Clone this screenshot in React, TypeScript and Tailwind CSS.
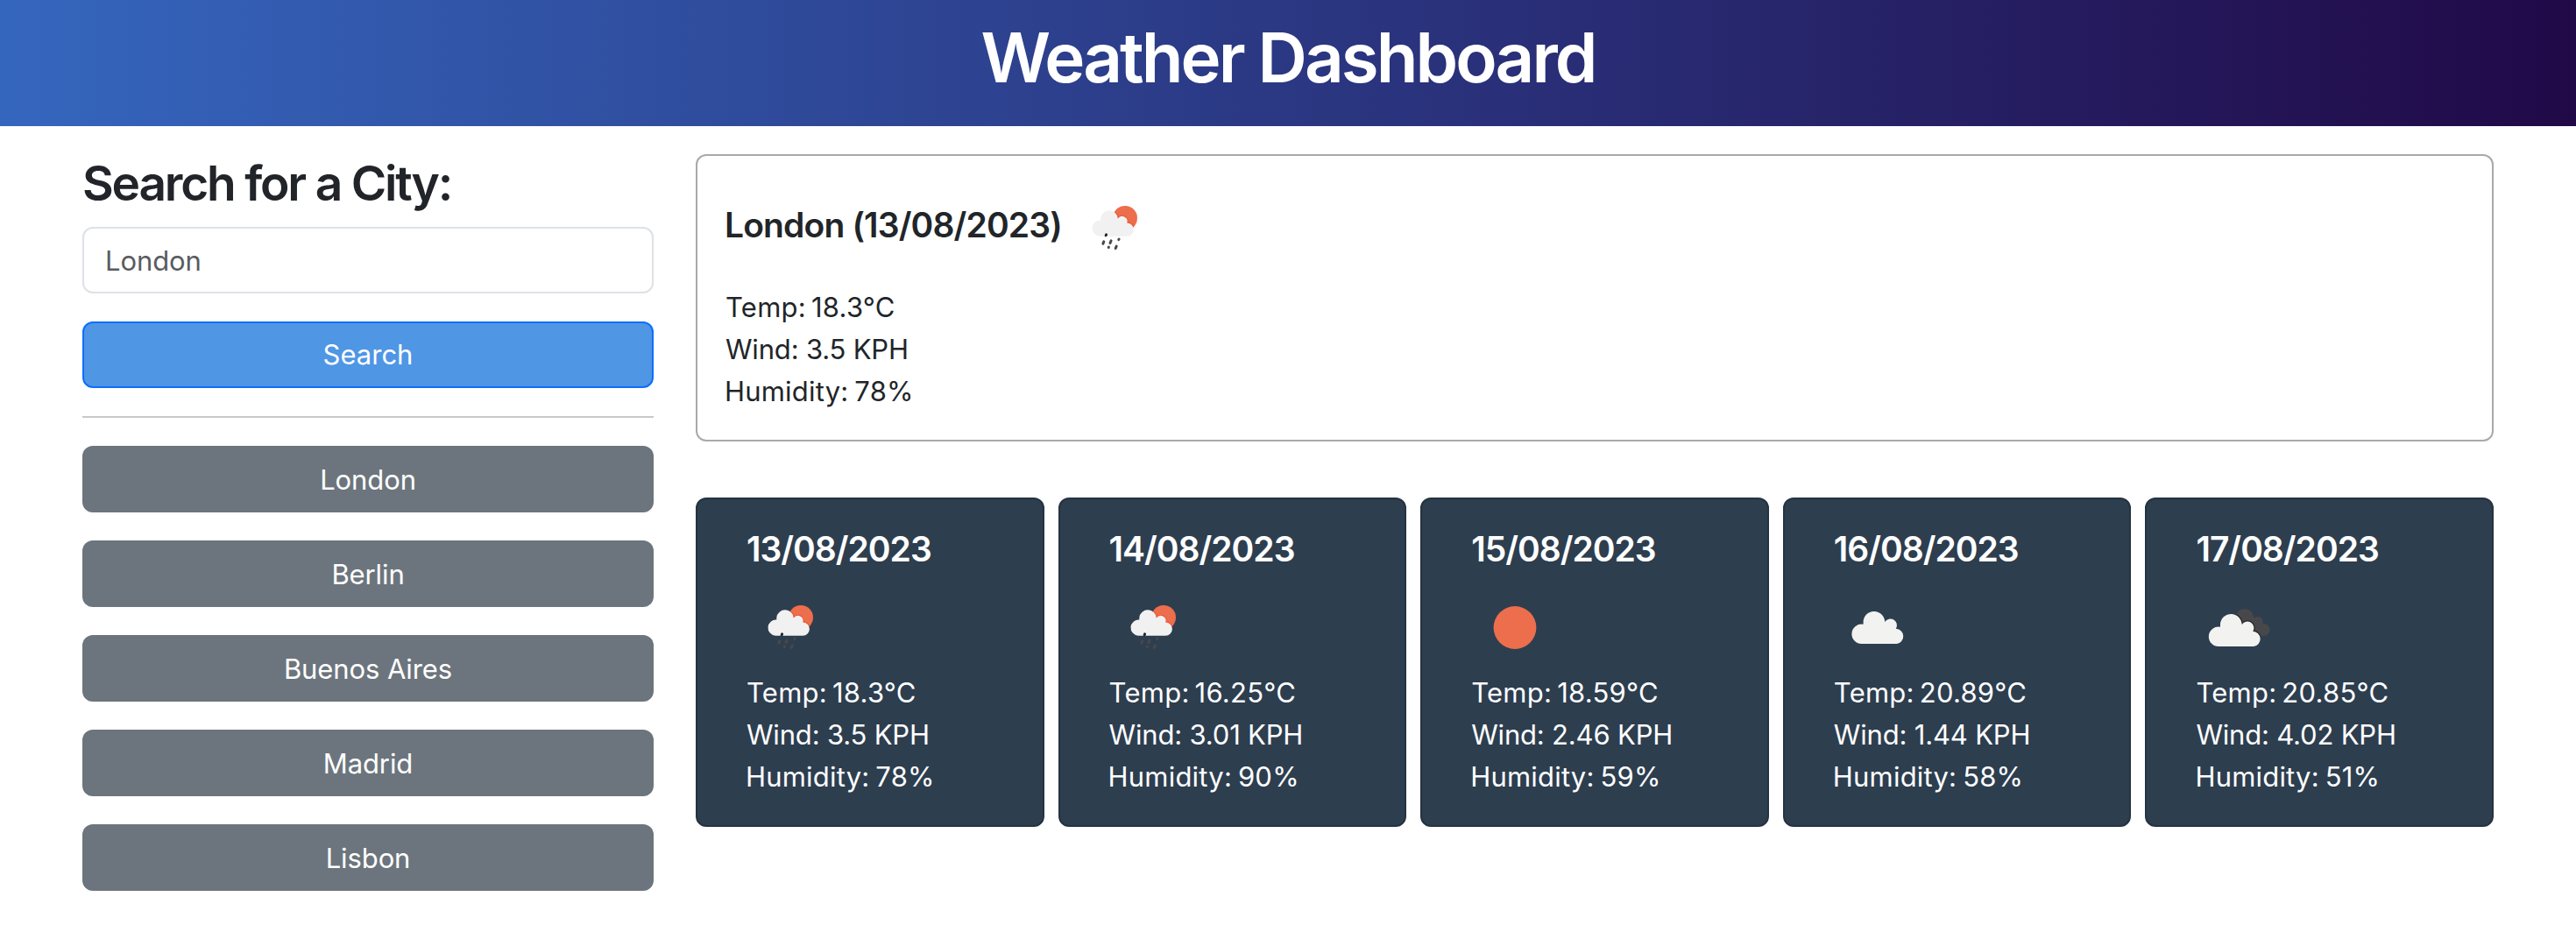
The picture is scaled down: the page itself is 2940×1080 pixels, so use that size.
import { useId } from "react";

type IconKind = "rain" | "clear" | "cloud" | "broken";

interface Forecast {
  date: string;
  icon: IconKind;
  temp: string;
  wind: string;
  humidity: string;
}

const cities = ["London", "Berlin", "Buenos Aires", "Madrid", "Lisbon"];

const forecasts: Forecast[] = [
  { date: "13/08/2023", icon: "rain", temp: "18.3", wind: "3.5", humidity: "78" },
  { date: "14/08/2023", icon: "rain", temp: "16.25", wind: "3.01", humidity: "90" },
  { date: "15/08/2023", icon: "clear", temp: "18.59", wind: "2.46", humidity: "59" },
  { date: "16/08/2023", icon: "cloud", temp: "20.89", wind: "1.44", humidity: "58" },
  { date: "17/08/2023", icon: "broken", temp: "20.85", wind: "4.02", humidity: "51" },
];

const bigCloud =
  "M32.4 69A11.2 11.2 0 1 1 33.6 46.8V44.3A12.3 12.3 0 0 1 58.2 44.1A7.3 7.3 0 0 1 70.9 51.7A8.7 8.7 0 0 1 71.8 69Z";
const smallCloud =
  "M33 59.7A9.1 9.1 0 1 1 34.3 41.5V39A9.8 9.8 0 0 1 53.8 39.4A5.9 5.9 0 0 1 64.3 44.5A7.6 7.6 0 0 1 64.3 59.7Z";

function RainIcon() {
  const id = useId();
  return (
    <>
      <clipPath id={id}>
        <circle cx="62" cy="39" r="14" />
      </clipPath>
      <circle cx="62" cy="39" r="14" fill="#ec6e4c" />
      <path d={smallCloud} fill="none" stroke="#ef4b2b" strokeWidth="1.8" clipPath={`url(#${id})`} />
      <path d={smallCloud} fill="#f1f1f1" />
      <g stroke="#48484a" strokeWidth="3" strokeLinecap="round">
        <path d="M40.6 57.8L40.2 58.8" stroke="#262626" />
        <path d="M37.8 65.9L36.9 68.3" />
        <path d="M46.1 64.8L45 67.5" />
        <path d="M55.1 63.1L54.8 63.6" />
        <path d="M43.4 72.1L43.2 72.5" />
        <path d="M52.2 71.1L51.2 73.5" />
      </g>
    </>
  );
}

function BrokenCloudsIcon() {
  const id = useId();
  const dark = (
    <>
      <circle cx="55.9" cy="39.3" r="10.4" />
      <circle cx="70.6" cy="43.9" r="6.1" />
      <circle cx="77.5" cy="53" r="7.1" />
      <path d="M55 40H67L73 47L77 60H55Z" />
    </>
  );
  return (
    <>
      <clipPath id={id}>{dark}</clipPath>
      <g fill="#48484a">{dark}</g>
      <g clipPath={`url(#${id})`}>
        <path d={bigCloud} transform="translate(-5.6 3)" fill="none" stroke="#262626" strokeWidth="2.4" />
      </g>
      <path d={bigCloud} transform="translate(-5.6 3)" fill="#f2f2f1" />
    </>
  );
}

function WeatherIcon({ kind }: { kind: IconKind }) {
  return (
    <svg viewBox="0 0 100 100" className="block size-[100px] shrink-0">
      {kind === "rain" && <RainIcon />}
      {kind === "clear" && <circle cx="50" cy="50.5" r="24.4" fill="#ec6e4c" />}
      {kind === "cloud" && <path d={bigCloud} fill="#f2f2f1" />}
      {kind === "broken" && <BrokenCloudsIcon />}
    </svg>
  );
}

function Readings({ temp, wind, humidity }: { temp: string; wind: string; humidity: string }) {
  return (
    <div className="text-[31px] leading-[48px]">
      <p className="tracking-[0.25px] [word-spacing:-3px]">Temp: {temp}°C</p>
      <p className="tracking-[-0.18px]">Wind: {wind} KPH</p>
      <p className="-ml-px tracking-[0.2px] [word-spacing:-2px]">Humidity: {humidity}%</p>
    </div>
  );
}

export default function App() {
  return (
    <div className="min-h-screen bg-white font-[Inter,sans-serif] text-[#212529]">
      <header className="h-36 bg-[linear-gradient(90deg,#3566be_0%,#210947_100%)] pt-[18px] text-center">
        <h1 className="text-[78px] leading-24 font-semibold tracking-[-2.93px] text-white">Weather Dashboard</h1>
      </header>

      <div className="flex gap-12 px-[94px] pt-8">
        <aside className="w-[652px] shrink-0">
          <h2 className="mb-4 text-[55px] leading-[67px] font-semibold tracking-[-2.2px]">Search for a City:</h2>
          <input
            type="text"
            placeholder="London"
            className="block h-[76px] w-full rounded-xl border-2 border-[#dee2e6] px-6 pt-px text-[31px] tracking-[-0.1px] placeholder:text-[#595c5f] focus:outline-none"
          />
          <button className="mt-8 block h-[76px] w-full rounded-xl border-2 border-[#0d6efd] bg-[#4f96e5] pt-px text-[31px] text-white">
            Search
          </button>
          <hr className="my-8 border-t-2 border-[#c8c9ca]" />
          <div className="flex flex-col gap-8">
            {cities.map((city) => (
              <button
                key={city}
                className="h-[76px] w-full rounded-xl bg-[#6c757d] pt-0.5 text-[31px] tracking-[-0.1px] text-white"
              >
                {city}
              </button>
            ))}
          </div>
        </aside>

        <main className="min-w-0 flex-1">
          <section className="h-[328px] rounded-xl border-2 border-[#a9a9a9] px-8 pt-8">
            <div className="flex h-[100px] items-center">
              <h3 className="-ml-px w-[395px] pb-1.5 text-[39px] leading-12 font-semibold tracking-[-0.86px] whitespace-nowrap">
                London (13/08/2023)
              </h3>
              <WeatherIcon kind="rain" />
            </div>
            <div className="mt-[17px]">
              <Readings temp="18.3" wind="3.5" humidity="78" />
            </div>
          </section>

          <section className="mt-16 grid grid-cols-5 gap-4">
            {forecasts.map((day) => (
              <article
                key={day.date}
                className="h-[376px] rounded-xl border-2 border-[#253341] bg-[#2d3e4f] pt-[33px] pl-14 text-white"
              >
                <h4 className="mb-[15px] text-[39px] leading-12 font-semibold tracking-[-1px]">{day.date}</h4>
                <WeatherIcon kind={day.icon} />
                <div className="mt-px">
                  <Readings temp={day.temp} wind={day.wind} humidity={day.humidity} />
                </div>
              </article>
            ))}
          </section>
        </main>
      </div>
    </div>
  );
}
